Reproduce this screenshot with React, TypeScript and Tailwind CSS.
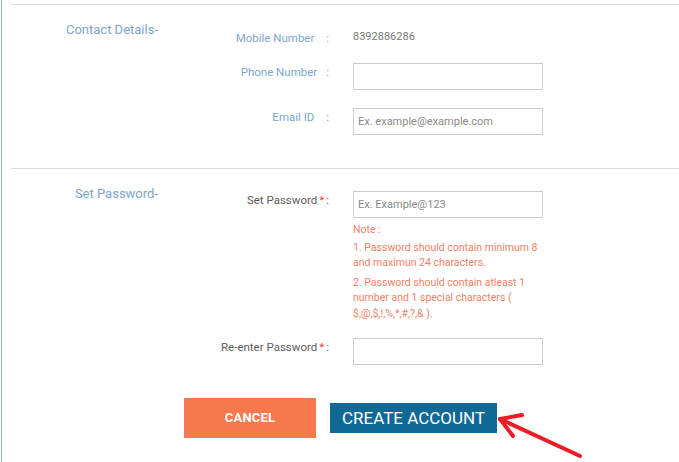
import React from 'react'

const font = { fontFamily: 'Roboto, "Liberation Sans", sans-serif' }

function Label({ text, required, blue }: { text: string; required?: boolean; blue?: boolean }) {
  return (
    <div
      className={`w-[171px] shrink-0 text-right text-[11.5px] leading-[14px] ${
        blue ? 'text-[#7ba6cd]' : 'text-[#5c5c5c]'
      }`}
    >
      {text}
      {required ? <span className="text-[#e8413b] ml-[2px]">*</span> : <span className="inline-block w-[7px]" />}
      <span className="ml-[2px]">:</span>
    </div>
  )
}

function Input({ placeholder }: { placeholder?: string }) {
  return (
    <input
      className="w-[190px] h-[27px] border-[1.5px] border-[#cbcbcb] px-[4px] text-[11px] text-[#444] placeholder:text-[#8a8a8a] outline-none"
      placeholder={placeholder}
    />
  )
}

export default function App() {
  return (
    <div style={font} className="relative w-[679px] h-[462px] bg-white overflow-hidden">
      <div className="ml-[1px] border-l-[1.5px] border-[#8db6c8] h-full pt-[4px]">
        {/* contact details */}
        <div className="ml-[9px] border-t border-[#dcdcdc] flex h-[164px]">
          <div className="w-[147px] shrink-0 text-right text-[13px] text-[#7ba6cd] pt-[17px] leading-[16px]">
            Contact Details-
          </div>
          <div className="flex flex-col pt-[26px]">
            <div className="flex items-start">
              <Label text="Mobile Number  " blue />
              <div className="ml-[24px] text-[11px] text-[#7a7a7a] leading-[13px] -mt-[1px]">8392886286</div>
            </div>
            <div className="flex items-start mt-[19px]">
              <div className="pt-[1px]">
                <Label text="Phone Number" blue />
              </div>
              <div className="ml-[24px] -mt-[1px]">
                <Input />
              </div>
            </div>
            <div className="flex items-start mt-[19px]">
              <div className="pt-[1px]">
                <Label text="Email ID  " blue />
              </div>
              <div className="ml-[24px] -mt-[1px]">
                <Input placeholder="Ex. example@example.com" />
              </div>
            </div>
          </div>
        </div>

        {/* password */}
        <div className="ml-[9px] border-t border-[#dcdcdc] flex">
          <div className="w-[147px] shrink-0 text-right text-[13px] text-[#7ba6cd] pt-[17px] leading-[16px]">
            Set Password-
          </div>
          <div className="flex flex-col pt-[22px]">
            <div className="flex items-start">
              <div className="pt-[2px]">
                <Label text="Set Password" required />
              </div>
              <div className="ml-[24px] flex flex-col">
                <Input placeholder="Ex. Example@123" />
                <div className="w-[190px] text-[10.5px] leading-[15.5px] text-[#f27f66] mt-[4px]">
                  <p>Note :</p>
                  <p className="mt-[2px]">1. Password should contain minimum 8 and maximun 24 characters.</p>
                  <p className="mt-[4px]">
                    2. Password should contain atleast 1 number and 1 special characters ( $,@,$,!,%,*,#,?,& ).
                  </p>
                </div>
              </div>
            </div>
            <div className="flex items-start mt-[17px]">
              <div className="pt-[2px]">
                <Label text="Re-enter Password" required />
              </div>
              <div className="ml-[24px]">
                <Input />
              </div>
            </div>
          </div>
        </div>

        {/* buttons */}
        <div className="flex items-center mt-[33px] ml-[182px] gap-[14px]">
          <button className="w-[132px] h-[40px] bg-[#f5794c] text-white text-[13px] font-bold tracking-[0.2px]">
            CANCEL
          </button>
          <button className="w-[167px] h-[30px] bg-[#106895] text-white text-[17px] leading-[30px]">
            CREATE ACCOUNT
          </button>
        </div>
      </div>

      <svg className="absolute left-0 top-0" width="679" height="462" viewBox="0 0 679 462">
        <g stroke="#ee1c24" strokeWidth="4" strokeLinecap="round" fill="none">
          <path d="M580 456 L500 419" />
          <path d="M500 419 L522 415" />
          <path d="M500 419 L513 436" />
        </g>
      </svg>
    </div>
  )
}
